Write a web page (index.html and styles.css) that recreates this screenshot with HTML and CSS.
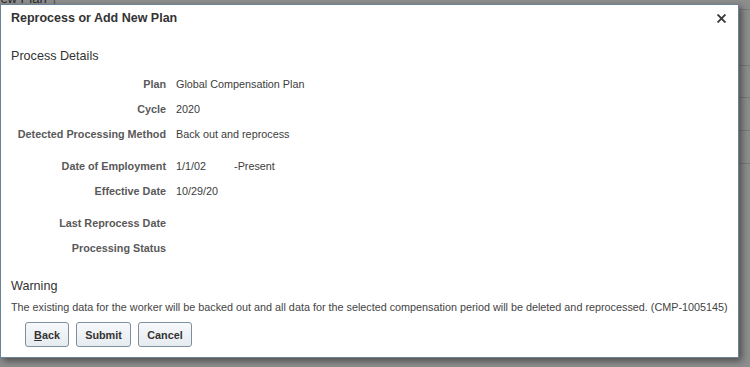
FILE: index.html
```html
<!DOCTYPE html>
<html lang="en">
<head>
  <meta charset="UTF-8" />
  <meta name="viewport" content="width=device-width, initial-scale=1.0"/>
  <title>Reprocess or Add New Plan</title>
  <link rel="stylesheet" href="styles.css">
</head>
<body>

  <!-- dimmed page behind the popup -->
  <div class="page">
    <div class="page-head">
      <span class="crumb">New Plan</span><span class="crumb-sep">|</span>
    </div>
    <div class="page-row row-a"></div>
    <div class="page-row row-b"></div>
    <div class="page-row row-c"></div>
    <div class="page-row row-d"></div>
  </div>

  <div class="dialog">
    <div class="dialog-header">
      <h1>Reprocess or Add New Plan</h1>
      <button type="button" class="close" title="Close">
        <svg width="9" height="9" viewBox="0 0 9 9">
          <path d="M1.2 1.2 L7.8 7.8 M7.8 1.2 L1.2 7.8" stroke="#3a3a3a" stroke-width="1.9" stroke-linecap="square"/>
        </svg>
      </button>
    </div>

    <div class="dialog-body">
      <h2>Process Details</h2>

      <div class="form">
        <div class="form-group">
          <label>Plan</label>
          <span class="value">Global Compensation Plan</span>
          <label>Cycle</label>
          <span class="value">2020</span>
          <label>Detected Processing Method</label>
          <span class="value">Back out and reprocess</span>
        </div>

        <div class="form-group">
          <label>Date of Employment</label>
          <span class="value">1/1/02 <span class="present">-Present</span></span>
          <label>Effective Date</label>
          <span class="value">10/29/20</span>
        </div>

        <div class="form-group">
          <label>Last Reprocess Date</label>
          <span class="value"></span>
          <label>Processing Status</label>
          <span class="value"></span>
        </div>
      </div>

      <h2 class="warning-title">Warning</h2>
      <p class="warning">The existing data for the worker will be backed out and all data for the selected compensation period will be deleted and reprocessed. (CMP-1005145)</p>

      <div class="buttons">
        <button type="button" class="btn btn-back"><u>B</u>ack</button>
        <button type="button" class="btn btn-submit">Submit</button>
        <button type="button" class="btn btn-cancel">Cancel</button>
      </div>
    </div>
  </div>

</body>
</html>
```

FILE: styles.css
```css
* {
  box-sizing: border-box;
}

body {
  margin: 0;
  width: 750px;
  height: 367px;
  overflow: hidden;
  font-family: Arial, "Liberation Sans", sans-serif;
  background: #8e8e8e;
  color: #333;
  position: relative;
}

/* page behind the popup */
.page-head {
  height: 19px;
  border-bottom: 1px solid #7b7b7b;
  margin-top: -9px;
  font-size: 13px;
  line-height: 15px;
  color: #2a2a2a;
  white-space: nowrap;
}

.crumb {
  margin-left: -9px;
}

.crumb-sep {
  margin-left: 6px;
  color: #555;
}

.page-row {
  border-bottom: 1px solid #7b7b7b;
}

.row-a { height: 56px; }
.row-b { height: 32px; }
.row-c { height: 33px; }
.row-d { height: 33px; }

/* popup */
.dialog {
  position: absolute;
  left: 0;
  top: 4px;
  width: 739px;
  height: 354px;
  background: #fff;
  border: 1px solid #6b8499;
  box-shadow: 3px 3px 7px rgba(0, 0, 0, 0.45);
}

.dialog-header {
  display: flex;
  align-items: center;
  justify-content: space-between;
  height: 25px;
  padding: 0 12px 0 10px;
}

h1 {
  margin: 0;
  font-size: 12.5px;
  font-weight: bold;
  color: #333;
}

.close {
  border: none;
  background: none;
  padding: 0;
  margin-top: 2px;
  width: 9px;
  height: 9px;
  display: flex;
  cursor: pointer;
}

.dialog-body {
  padding: 0 10px;
}

h2 {
  margin: 17px 0 0;
  font-size: 12.6px;
  font-weight: normal;
  line-height: 18px;
  color: #333;
}

.form {
  margin-top: 6px;
}

.form-group {
  display: grid;
  grid-template-columns: 155px 1fr;
  column-gap: 10px;
  grid-auto-rows: 25px;
  align-items: center;
  font-size: 10.8px;
  margin-bottom: 7px;
}

.form-group:last-child {
  margin-bottom: 0;
}

label {
  text-align: right;
  font-size: 10.8px;
  font-weight: bold;
  color: #595959;
}

.value {
  color: #3c3c3c;
}

.present {
  margin-left: 25px;
}

.warning-title {
  margin-top: 17px;
}

.warning {
  margin: 4px 0 0;
  font-size: 10.8px;
  line-height: 16px;
  color: #444;
  white-space: nowrap;
}

.buttons {
  display: flex;
  gap: 7px;
  margin-top: 7px;
  padding-left: 14px;
}

.btn {
  height: 25px;
  padding: 0 8px;
  border: 1px solid #7e8fa0;
  border-radius: 3px;
  background: linear-gradient(#f7f9fb, #e6ebf0);
  font-family: Arial, "Liberation Sans", sans-serif;
  font-size: 10.8px;
  font-weight: bold;
  color: #333;
  cursor: pointer;
}

.btn-back { width: 44px; }
.btn-submit { width: 55px; }
.btn-cancel { width: 54px; }

.btn:hover {
  background: linear-gradient(#fff, #edf1f5);
}
```
